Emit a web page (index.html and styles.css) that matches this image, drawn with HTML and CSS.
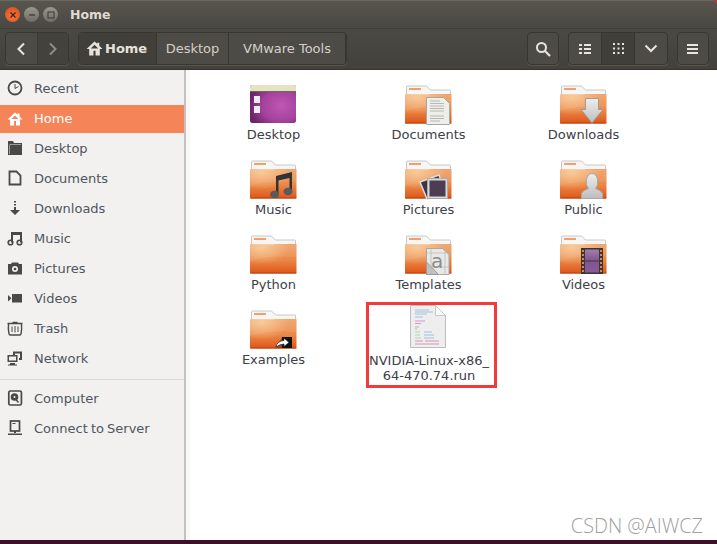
FILE: index.html
```html
<!DOCTYPE html>
<html lang="en">
<head>
<meta charset="utf-8">
<title>Home</title>
<link rel="stylesheet" href="styles.css">
</head>
<body>
<svg class="defs" width="0" height="0" aria-hidden="true">
  <defs>
    <linearGradient id="fg" x1="0" y1="0" x2="0" y2="1">
      <stop offset="0" stop-color="#f0a268"/>
      <stop offset=".55" stop-color="#ea8746"/>
      <stop offset="1" stop-color="#de5518"/>
    </linearGradient>
    <radialGradient id="fh" cx=".25" cy=".1" r=".6">
      <stop offset="0" stop-color="#fbd09c" stop-opacity=".8"/>
      <stop offset="1" stop-color="#fbd09c" stop-opacity="0"/>
    </radialGradient>
    <radialGradient id="pg" cx=".68" cy=".55" r=".7">
      <stop offset="0" stop-color="#c056b4"/>
      <stop offset=".6" stop-color="#a2429c"/>
      <stop offset="1" stop-color="#6b2468"/>
    </radialGradient>
    <linearGradient id="gg" x1="0" y1="0" x2="0" y2="1">
      <stop offset="0" stop-color="#eeeeee"/>
      <stop offset="1" stop-color="#bdbdbd"/>
    </linearGradient>
    <linearGradient id="vg" x1="0" y1="0" x2="0" y2="1">
      <stop offset="0" stop-color="#a57ab0"/>
      <stop offset=".5" stop-color="#7f5590"/>
      <stop offset="1" stop-color="#8b5a9a"/>
    </linearGradient>
    <symbol id="folder" viewBox="0 0 48 40">
      <path d="M1.500 10V2q0-1 1-1h19l4 4h19q1 0 1 1v6z" fill="#f6f6f4" stroke="#c8c8c4"/>
      <rect x="4" y="3" width="12" height="2" fill="#f0a070"/>
      <path d="M0 9.500h23l3-.5h20.500v28q0 1.500-1.500 1.500H1.500Q0 38.500 0 37z" fill="url(#fg)"/>
      <path d="M0 9.500h23l3-.5h20.500v28q0 1.500-1.500 1.500H1.500Q0 38.500 0 37z" fill="url(#fh)"/>
      <path d="M0 26Q20 20 46.500 22V9.500H0z" fill="#fff" opacity=".08"/>
      <rect y="37.500" x="0" width="46.500" height="1" fill="#b8400e"/>
    </symbol>
    <symbol id="i-clock" viewBox="0 0 16 16"><circle cx="8" cy="8" r="6.500" fill="none" stroke="currentColor" stroke-width="1.800"/><path d="M8 8.500l3.500-2M8 4v4.500" stroke="currentColor" fill="none"/></symbol>
    <symbol id="i-home" viewBox="0 0 16 16"><path d="M8 1.500L.5 8.500h2.500V14.500h4V10h2v4.500h4V8.500h2.500L12.500 5.500V2.500h-2v1zM8 4.500L4.500 8h7z" fill="currentColor" fill-rule="evenodd"/></symbol>
    <symbol id="i-folder" viewBox="0 0 16 16"><path d="M1 1h5l1 2h8v12H1zM2.500 4.500V14H3V5h11V4.500z" fill="currentColor" fill-rule="evenodd"/></symbol>
    <symbol id="i-doc" viewBox="0 0 16 16"><path d="M2.500 1.500h7l4 4v9h-11z" fill="none" stroke="currentColor" stroke-width="1.800"/></symbol>
    <symbol id="i-dl" viewBox="0 0 16 16"><path d="M7 1h2v1.500H7zM7 4h2v1.500H7zM7 7h2v3h4l-5 5-5-5h4z" fill="currentColor"/></symbol>
    <symbol id="i-music" viewBox="0 0 16 16"><path d="M4 2h11v10.500h-2V5H6v7.500H4z" fill="currentColor"/><circle cx="3.500" cy="12.500" r="2.300" fill="none" stroke="currentColor" stroke-width="1.600"/><circle cx="12.500" cy="12.500" r="2.300" fill="none" stroke="currentColor" stroke-width="1.600"/></symbol>
    <symbol id="i-cam" viewBox="0 0 16 16"><path d="M5 2.500h6l1 1.500h3V14.500H1V4h3z" fill="currentColor"/><circle cx="8" cy="9" r="3" fill="#f2f1ef"/><circle cx="8" cy="9" r="1.300" fill="currentColor"/></symbol>
    <symbol id="i-vid" viewBox="0 0 16 16"><rect x="5" y="4" width="10" height="8.500" fill="currentColor"/><path d="M1 5l3.500 3.200L1 11.500z" fill="currentColor"/></symbol>
    <symbol id="i-trash" viewBox="0 0 16 16"><path d="M.5 3.500h15M5.500 2.500h5" stroke="currentColor" stroke-width="1.300" fill="none"/><path d="M1.500 4q-.5 5 .5 10l1 1h10l1-1q1-5 .5-10" fill="none" stroke="currentColor" stroke-width="1.400"/><path d="M5 6.500v5.500M8 6v6.500M11 6.500v5.500" stroke="currentColor" fill="none"/></symbol>
    <symbol id="i-net" viewBox="0 0 16 16"><path d="M6 1.500h9V10h-3V8h1V3.500H8V5H6z" fill="currentColor"/><rect x=".5" y="5" width="10" height="7" fill="currentColor"/><rect x="2" y="6.500" width="7" height="4" fill="#f2f1ef"/><path d="M3 13h5v2H3zM1 14.500h9v1H1z" fill="currentColor"/></symbol>
    <symbol id="i-disk" viewBox="0 0 16 16"><rect x="1.800" y="1" width="12.600" height="14" rx="1.500" fill="none" stroke="currentColor" stroke-width="1.700"/><circle cx="7.500" cy="7" r="3.800" fill="currentColor"/><circle cx="7.500" cy="7" r="1" fill="#f2f1ef"/><path d="M8.500 9l3 3.500" stroke="currentColor" stroke-width="1.500"/></symbol>
    <symbol id="i-srv" viewBox="0 0 16 16"><rect x="3.500" y="1" width="9" height="10" fill="none" stroke="currentColor" stroke-width="1.700"/><rect x="5.500" y="3" width="3" height="1" fill="currentColor"/><path d="M7 11h2v2H7zM1 13.500h14V15H1z" fill="currentColor"/></symbol>
  </defs>
</svg>

<div class="window">
  <header class="titlebar">
    <div class="controls">
      <span class="ctl close"><svg width="8" height="8" viewBox="0 0 8 8"><path d="M1.500 1.500l5 5M6.500 1.500l-5 5" stroke="#4a2010" stroke-width="1.300"/></svg></span>
      <span class="ctl"><svg width="8" height="8" viewBox="0 0 8 8"><path d="M1 4h6" stroke="#3c3b37" stroke-width="1.300"/></svg></span>
      <span class="ctl"><svg width="8" height="8" viewBox="0 0 8 8"><rect x="1" y="1" width="6" height="6" fill="none" stroke="#3c3b37"/></svg></span>
    </div>
    <span class="wintitle">Home</span>
    <span class="corner"></span>
  </header>

  <div class="toolbar">
    <div class="btn-group nav">
      <button class="tb-btn nav-btn"><svg width="12" height="14" viewBox="0 0 12 14"><path d="M9 1.500L3.500 7 9 12.500" fill="none" stroke="#e8e5df" stroke-width="2"/></svg></button>
      <button class="tb-btn nav-btn off"><svg width="12" height="14" viewBox="0 0 12 14"><path d="M3 1.500L8.500 7 3 12.500" fill="none" stroke="#8f8d87" stroke-width="2"/></svg></button>
    </div>
    <div class="btn-group path">
      <button class="crumb current"><svg class="crumb-ico"><use href="#i-home"/></svg>Home</button>
      <button class="crumb c-desktop">Desktop</button>
      <button class="crumb c-vmware">VMware Tools</button>
    </div>
    <div class="tools">
      <button class="tb-btn square group-solo"><svg width="16" height="16" viewBox="0 0 16 16"><circle cx="6.500" cy="6.500" r="4.500" fill="none" stroke="#e8e5df" stroke-width="2"/><path d="M10 10l5 5" stroke="#e8e5df" stroke-width="2.200"/></svg></button>
      <div class="btn-group views">
        <button class="tb-btn square"><svg width="12" height="12" viewBox="0 0 12 12"><path d="M0 1h3v2H0zM5 1h7v2H5zM0 5h3v2H0zM5 5h7v2H5zM0 9h3v2H0zM5 9h7v2H5z" fill="#e8e5df"/></svg></button>
        <button class="tb-btn square pressed"><svg width="11" height="11" viewBox="0 0 11 11"><path d="M0 0h2v2H0zM4.500 0h2v2h-2zM9 0h2v2H9zM0 4.500h2v2H0zM4.500 4.500h2v2h-2zM9 4.500h2v2H9zM0 9h2v2H0zM4.500 9h2v2h-2zM9 9h2v2H9z" fill="#e8e5df"/></svg></button>
        <button class="tb-btn square"><svg width="14" height="10" viewBox="0 0 14 10"><path d="M1.500 1.500L7 7l5.500-5.500" fill="none" stroke="#e8e5df" stroke-width="2"/></svg></button>
      </div>
      <button class="tb-btn square group-solo"><svg width="12" height="12" viewBox="0 0 12 12"><path d="M0 1h11v2H0zM0 5h11v2H0zM0 9h11v2H0z" fill="#e8e5df"/></svg></button>
    </div>
  </div>

  <div class="body">
    <nav class="sidebar">
      <ul class="places">
        <li class="place"><svg class="p-ico"><use href="#i-clock"/></svg>Recent</li>
        <li class="place active"><svg class="p-ico"><use href="#i-home"/></svg>Home</li>
        <li class="place"><svg class="p-ico"><use href="#i-folder"/></svg>Desktop</li>
        <li class="place"><svg class="p-ico"><use href="#i-doc"/></svg>Documents</li>
        <li class="place"><svg class="p-ico"><use href="#i-dl"/></svg>Downloads</li>
        <li class="place"><svg class="p-ico"><use href="#i-music"/></svg>Music</li>
        <li class="place"><svg class="p-ico"><use href="#i-cam"/></svg>Pictures</li>
        <li class="place"><svg class="p-ico"><use href="#i-vid"/></svg>Videos</li>
        <li class="place"><svg class="p-ico"><use href="#i-trash"/></svg>Trash</li>
        <li class="place"><svg class="p-ico"><use href="#i-net"/></svg>Network</li>
      </ul>
      <ul class="places second">
        <li class="place"><svg class="p-ico"><use href="#i-disk"/></svg>Computer</li>
        <li class="place"><svg class="p-ico"><use href="#i-srv"/></svg>Connect to Server</li>
      </ul>
    </nav>

    <main class="files">
      <div class="file">
        <svg class="f-ico" viewBox="0 0 48 40"><rect x="0" y="0" width="46" height="38" rx="2.500" fill="url(#pg)"/><path d="M0 7V2.500Q0 0 2.500 0h41Q46 0 46 2.500V7z" fill="#e6e2c4"/><path d="M0 7V6h46v1z" fill="#6f6a50"/><path d="M4 11h6v7H4zM4 21h6v7H4z" fill="#eee"/></svg>
        <span class="f-name">Desktop</span>
      </div>
      <div class="file">
        <svg class="f-ico" viewBox="0 0 48 40"><use href="#folder" width="48" height="40"/><path d="M21.500 12.500h17l6 6v21h-23z" fill="#eeeeea" stroke="#a8a8a4"/><path d="M25 16h10M25 18.500h14M25 21h14M25 23.500h14M25 26h14M25 31h14M25 33.500h14M25 36h10" stroke="#a9a9a5" stroke-width=".8"/></svg>
        <span class="f-name">Documents</span>
      </div>
      <div class="file">
        <svg class="f-ico" viewBox="0 0 48 40"><use href="#folder" width="48" height="40"/><path d="M25.500 13.500h13v11h4.500L32 38 21 24.500h4.500z" fill="url(#gg)" stroke="#9c9c98"/></svg>
        <span class="f-name">Downloads</span>
      </div>

      <div class="file">
        <svg class="f-ico" viewBox="0 0 48 40"><use href="#folder" width="48" height="40"/><path d="M26 34V16l16-4v19h-2.500V18l-11 2.500V34z" fill="#333"/><ellipse cx="24.500" cy="34.500" rx="4.500" ry="3.800" fill="#5a5a5a"/><ellipse cx="38" cy="31.500" rx="4.500" ry="3.800" fill="#5a5a5a"/></svg>
        <span class="f-name">Music</span>
      </div>
      <div class="file">
        <svg class="f-ico" viewBox="0 0 48 40"><use href="#folder" width="48" height="40"/><path d="M15 22l19-7 7 19-19 5z" fill="#3f3444" stroke="#ddd" stroke-width="1.500"/><rect x="22.500" y="18.500" width="20" height="20" fill="#d8d8d4" stroke="#aaa"/><rect x="24.500" y="20.500" width="16" height="16" fill="#4e3c52"/></svg>
        <span class="f-name">Pictures</span>
      </div>
      <div class="file">
        <svg class="f-ico" viewBox="0 0 48 40"><use href="#folder" width="48" height="40"/><path d="M21.500 38.500v-5q1-3 7-5-3-3-2-9 1-6 5.500-6t5.500 6q1 6-2 9 6 2 7 5v5z" fill="url(#gg)" stroke="#a8a8a4"/></svg>
        <span class="f-name">Public</span>
      </div>

      <div class="file">
        <svg class="f-ico" viewBox="0 0 48 40"><use href="#folder" width="48" height="40"/></svg>
        <span class="f-name">Python</span>
      </div>
      <div class="file">
        <svg class="f-ico" viewBox="0 0 48 40"><use href="#folder" width="48" height="40"/><path d="M21.500 13.500h16l6.500 6v20H21.500z" fill="#e8e8e6" stroke="#a8a8a4"/><path d="M21.500 27l12 12.500h-12z" fill="#c2c2c0" stroke="#9a9a98"/><path d="M26 13.500v26M40 13.500v26M21.500 32h22.500M21.500 18h22.500" stroke="#b8b8b6" stroke-width=".7"/></svg>
        <span class="f-glyph">a</span>
        <span class="f-name">Templates</span>
      </div>
      <div class="file">
        <svg class="f-ico" viewBox="0 0 48 40"><use href="#folder" width="48" height="40"/><rect x="21" y="13" width="22" height="26" fill="#383535"/><rect x="25" y="14.500" width="14" height="23" fill="url(#vg)"/><path d="M25 26h14" stroke="#55405c" stroke-width="1.500"/><path d="M22 16h2M22 20h2M22 24h2M22 28h2M22 32h2M22 36h2M40 16h2M40 20h2M40 24h2M40 28h2M40 32h2M40 36h2" stroke="#d98a4a" stroke-width="2"/></svg>
        <span class="f-name">Videos</span>
      </div>

      <div class="file">
        <svg class="f-ico" viewBox="0 0 48 40"><use href="#folder" width="48" height="40"/><path d="M32 27v11h-6z" fill="#333" opacity=".45"/><rect x="32" y="27" width="10" height="11" fill="#111"/><path d="M26 37q1-6 8-6.500v-2.500l5 4.500-5 4V34q-4 0-8 3z" fill="#fff" stroke="#222" stroke-width=".7"/></svg>
        <span class="f-name">Examples</span>
      </div>
      <div class="file selected">
        <svg class="f-doc" viewBox="0 0 36 43"><path d="M.5 .5h25l10 10v32H.5z" fill="#eeeeee" stroke="#bdbdbd"/><path d="M25.500 .5v10h10z" fill="#fafafa" stroke="#c8c8c8"/><g stroke-width=".7"><path d="M5 5h14M5 7h18M5 9h12M5 12h8" stroke="#7fb2d8"/><path d="M5 16h10M5 18.500h6" stroke="#d070c0"/><path d="M5 22h4M5 24h2" stroke="#8cb060"/><path d="M5 27h5M5 30h5M5 33h6" stroke="#8cd080"/><path d="M14 27h8M14 30h10M14 33h10" stroke="#70b0d8"/><path d="M5 36h8M15 36h14M5 39h24" stroke="#d06a9a"/></g></svg>
        <span class="f-name">NVIDIA-Linux-x86_<br>64-470.74.run</span>
      </div>
    </main>
  </div>
  <div class="watermark">CSDN @AIWCZ</div>
</div>
<div class="desktop-strip"></div>
</body>
</html>
```

FILE: styles.css
```css
* { box-sizing: border-box; }
html, body { margin: 0; padding: 0; height: 544px; overflow: hidden; }
body { font-family: "DejaVu Sans", sans-serif; font-size: 13px; background: #fff; display: flex; flex-direction: column; }
.defs { position: absolute; }
ul { list-style: none; margin: 0; padding: 0; }
button { font: inherit; margin: 0; padding: 0; border: 0; background: none; color: inherit; }

.window { height: 540px; display: flex; flex-direction: column; position: relative; }
.desktop-strip { height: 4px; background: #3e1028; }

.titlebar { height: 29px; display: flex; align-items: center; padding-left: 5px; position: relative; background: linear-gradient(#57554e, #4a4842); border-top: 1px solid #6a6862; border-bottom: 1px solid #3f3e39; }
.controls { display: flex; gap: 4px; }
.ctl { width: 15px; height: 15px; border-radius: 50%; background: linear-gradient(#99978f, #6e6c65); display: flex; align-items: center; justify-content: center; }
.ctl.close { background: radial-gradient(circle at 50% 60%, #f4793c, #d8471f); }
.wintitle { margin-left: 12px; font-weight: 700; font-size: 12.500px; color: #dfdbd2; }
.corner { position: absolute; right: 0; top: -1px; width: 0; height: 0; border-top: 4px solid #b03a3a; border-left: 4px solid transparent; }

.toolbar { height: 41px; display: flex; align-items: center; padding: 0 8px 1px 5px; background: linear-gradient(#4b4943, #42413b); border-bottom: 1px solid #35342f; color: #d8d5cd; }
.btn-group { display: flex; height: 33px; border: 1px solid #38372f; border-radius: 4px; background: #4d4b45; box-shadow: 0 1px 0 #56544e; }
.nav { width: 64px; }
.nav-btn { flex: 1; display: flex; align-items: center; justify-content: center; }
.nav-btn.off { background: #44423d; border-left: 1px solid #3a3935; border-radius: 0 3px 3px 0; }
.path { margin-left: 9px; width: 269px; }
.crumb { height: 100%; display: flex; align-items: center; justify-content: center; border-right: 1px solid #38372f; color: #d3d0c8; }
.crumb.current { width: 78px; background: #403f3a; color: #e6e3dc; font-weight: 700; border-radius: 3px 0 0 3px; justify-content: flex-start; padding-left: 7px; }
.crumb-ico { width: 17px; height: 17px; color: #e6e3dc; margin-right: 2px; flex: none; }
.c-desktop { width: 72px; }
.c-vmware { width: 117px; }
.tools { margin-left: auto; display: flex; gap: 9px; }
.square { width: 32px; height: 100%; display: flex; align-items: center; justify-content: center; }
.group-solo { height: 33px; border: 1px solid #38372f; border-radius: 4px; background: #4d4b45; box-shadow: 0 1px 0 #56544e; }
.views .square + .square { border-left: 1px solid #38372f; width: 33px; }
.pressed { background: #403f3a; }

.body { flex: 1; display: flex; min-height: 0; }
.sidebar { width: 186px; background: #f2f1ef; border-right: 2px solid #c4c2be; padding-top: 4px; color: #4f5560; display: flex; flex-direction: column; flex: none; word-spacing: -1px; }
.places { display: flex; flex-direction: column; }
.place { height: 30px; display: flex; align-items: center; padding-left: 7px; gap: 11px; padding-bottom: 2px; }
.place.active { background: #f58458; color: #fff; height: 28px; margin: 1px 0; padding-bottom: 1px; }
.p-ico { width: 16px; height: 16px; color: #4a4946; flex: none; }
.active .p-ico { color: #fff; }
.second { border-top: 1px solid #dcdad6; margin-top: 5px; padding-top: 4px; }

.files { flex: 1; border-left: 4px solid #f8f8f7; padding: 15px 0 0 6px; display: grid; grid-template-columns: repeat(3, 155px); grid-auto-rows: 75px; align-content: start; background: #fff; }
.file { position: relative; display: flex; flex-direction: column; align-items: center; color: #3d4048; text-align: center; }
.f-ico { width: 48px; height: 40px; flex: none; }
.f-doc { width: 36px; height: 43px; flex: none; margin-left: -2px; }
.f-name { line-height: 15px; margin-top: 2px; }
.f-glyph { position: absolute; left: 80px; top: 15px; font-size: 20px; line-height: 22px; color: #8d8d8b; }
.selected { width: 131px; height: 86px; margin: -8px 0 0 15px; border: 3px solid #f23a3a; padding-right: 5px; }
.selected .f-name { margin-top: 5px; white-space: nowrap; }

.watermark { position: absolute; right: 14px; bottom: 1px; font-size: 19.800px; font-family: "Open Sans", sans-serif; font-weight: 300; color: #a0a0a0; }
```
